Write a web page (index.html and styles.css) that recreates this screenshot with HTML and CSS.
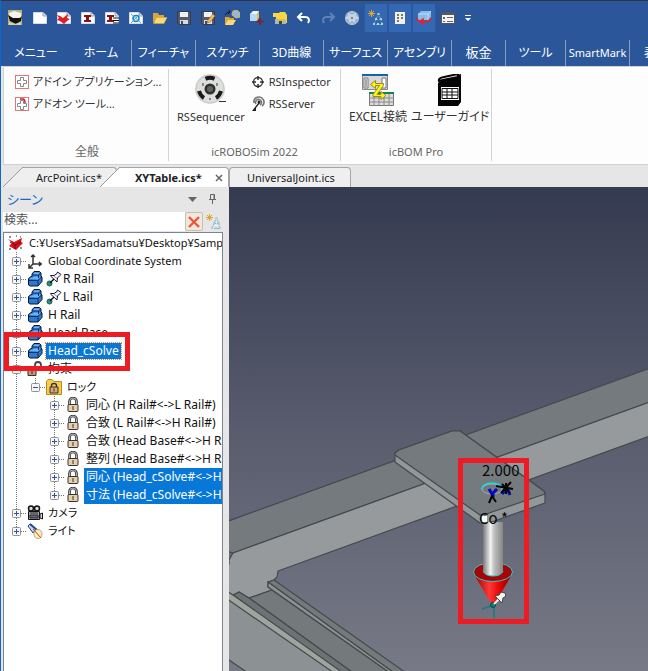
FILE: index.html
```html
<!DOCTYPE html>
<html lang="ja">
<head>
<meta charset="utf-8">
<title>XYTable.ics</title>
<link rel="stylesheet" href="styles.css">
</head>
<body>
<svg class="sprite" aria-hidden="true">
  <symbol id="plus" viewBox="0 0 9 9"><rect x=".5" y=".5" width="8" height="8" rx="1" fill="#f6f6f6" stroke="#919191"/><path d="M2 4.500h5M4.500 2v5" stroke="#3451a0"/></symbol>
  <symbol id="minus" viewBox="0 0 9 9"><rect x=".5" y=".5" width="8" height="8" rx="1" fill="#f6f6f6" stroke="#919191"/><path d="M2 4.500h5" stroke="#3451a0"/></symbol>
  <symbol id="part" viewBox="0 0 16 16"><path d="M1.500 7.500 4 5.500h1V3l2-2.500h5.500L14 2v3l1 1v4.500L11 15H3l-1.500-1z" fill="#2c7ad0" stroke="#07162c"/><path d="M2.500 8 4.500 6.500H6l1-1h5L14 6l-3 2.500zM6 3.500 7.500 1.500H12l1 1-1.500 1.500z" fill="#6fb2f3"/><path d="M2 9.500h9v5M11 9.500 14.500 6M5.500 4h6v3M11.500 4l2-2" fill="none" stroke="#0c2f63"/></symbol>
  <symbol id="pin3d" viewBox="0 0 16 16"><circle cx="3.500" cy="12.500" r="2.500" fill="#2a9380" stroke="#155c55"/><path d="m4 12 4-4" stroke="#111" stroke-width="1.500"/><path d="M4.500 4.500 8 4.500l3-2 .5-1.500L15 3.500l-1 1L11.500 7 11 11 4.500 5z" fill="#f4f4f8" stroke="#15183a"/><path d="m8 5 3 2.500" stroke="#8e90a6"/></symbol>
  <symbol id="lock" viewBox="0 0 16 16"><path d="M4.500 8V4.500a3.500 3.500 0 0 1 7 0V8" fill="none" stroke="#333" stroke-width="2.600"/><path d="M4.500 8V4.500a3.500 3.500 0 0 1 7 0V8" fill="none" stroke="#ddd" stroke-width=".8"/><rect x="3" y="7.500" width="10" height="7" rx="1" fill="#e9cfa9" stroke="#333"/><path d="M8 9v4" stroke="#333"/></symbol>
  <symbol id="filter" viewBox="0 0 16 16"><path d="M3.500 0v7M0 3.500h7M1 1l5 5M6 1 1 6" stroke="#d9a632"/><path d="M10.500 3.500 6 14.500M10.500 3.500l4 11M8 9.500h5M5 14.500h10" stroke="#75a9bd" stroke-dasharray="2 1"/><path d="M9.500 3h2v2h-2zM7 8h2v2H7zM12 8h2v2h-2zM5 13h2v2H5zM9 13h2v2H9zM13 13h2v2h-2z" fill="#a9d2d8"/></symbol>
  <symbol id="sheet" viewBox="0 0 16 16"><path d="M1.500 2.500H11L14.500 6v7.500h-13z" fill="#fff" stroke="#d7dbe2"/><path d="M11 2.500V6h3.500" fill="#dde1e6" stroke="#9aa0ab"/></symbol>
  <symbol id="folder" viewBox="0 0 16 16"><path d="M1 3h5l1 2h5v3H5l-4 5z" fill="#d6a737"/><path d="M4.500 7.500H15L12 13.500H1.500z" fill="#fbd978" stroke="#d7a838" stroke-width=".6"/></symbol>
  <symbol id="disk" viewBox="0 0 16 16"><path d="M1.500 1.500h13v13H3L1.500 13z" fill="#555c68" stroke="#343a46"/><path d="M4 2h8v5H4z" fill="#eef1f5"/><path d="M4 10h8v4H4z" fill="#d6dae1"/><path d="M5 11h2v3H5z" fill="#454c58"/></symbol>
</svg>

<div class="window">
  <header class="titlebar">
    <div class="quick">
      <button class="app" aria-label="アプリケーション"><svg viewBox="0 0 16 16"><path fill="#b9b17f" d="M1 0h14v15H1z"/><path d="m2 3 5-2 7 2v4l-4 2-7-1z" fill="#f4f4ee"/><path d="m1 5 5 3h7l2-2-1 5-5 3-6-3z" fill="#111"/><path d="m2 12 6 2 6-2v3H2z" fill="#d8d29e"/></svg></button>
      <button aria-label="新規"><svg><use href="#sheet"/></svg></button>
      <button aria-label="新規シーン"><svg viewBox="0 0 16 16"><use href="#sheet"/><path d="m1 5 3 1 3 2 5-4-1 4 3 1-3 2-3 3-4-3-3-1 2-2z" fill="#df1e26"/></svg></button>
      <button aria-label="新規図面"><svg viewBox="0 0 16 16"><use href="#sheet"/><path d="M4 5h7v2H9v3h2v2H4v-2h2V7H4z" fill="#8c1018"/></svg></button>
      <button aria-label="図面リスト"><svg viewBox="0 0 16 16"><use href="#sheet"/><path d="M3 5h7v2H8v3h2v2H3v-2h2V7H3z" fill="#8c1018"/><path d="M9 8h6M9 10.500h6M9 13h6" stroke="#111"/></svg></button>
      <button aria-label="CAXA図面"><svg viewBox="0 0 16 16"><use href="#sheet"/><circle cx="8" cy="8.500" r="3" fill="#e8f7ff" stroke="#1684b8" stroke-width="1.500"/><path d="m3 4 10 9M12 4l-9 9" stroke="#48aad2"/></svg></button>
      <button aria-label="開く"><svg><use href="#folder"/></svg></button>
      <button aria-label="保存"><svg><use href="#disk"/></svg></button>
      <button aria-label="名前を付けて保存"><svg viewBox="0 0 16 16"><use href="#disk"/><path d="m7 13 1-3 5-6 2 2-5 6z" fill="#f4bd5d" stroke="#9b6023" stroke-width=".6"/></svg></button>
      <button aria-label="読み込み"><svg viewBox="0 0 16 16"><path d="M1 7h4l1 1h4v2H5l-4 5z" fill="#dba834"/><path d="M4 10h8l-3 5H1z" fill="#fbd978"/><path d="m9 1 4-1 3 3v4l-4 1-4-3z" fill="#8fb8e6" stroke="#e5b33c"/><path d="M1 5q1-3 5-3L5 0M6 2 4 4" fill="none" stroke="#101827"/></svg></button>
      <button aria-label="ブロック追加"><svg viewBox="0 0 16 16"><path d="m2 4 3-3h6L9 4z" fill="#edf7ff"/><path d="M2 4h7v7H2z" fill="#b9daf6"/><path d="m9 4 2-3v7l-2 3z" fill="#e7bf4d"/><path d="M12 8v7M8.500 11.500h7" stroke="#8f1722" stroke-width="1.500"/></svg></button>
      <button aria-label="カタログ"><svg viewBox="0 0 16 16"><path d="M1 3h6l1-1h5l2 3v8H4V7H1z" fill="#f8d746"/><path d="M3 9h10v5H3z" fill="#e6bd28"/><path d="M3 14v-4l2-1 2 2v3zm8 0v-4h3v4z" fill="#a6b8c7"/><path d="M7 14v-3h3v3z" fill="#38464e"/></svg></button>
      <button aria-label="元に戻す"><svg viewBox="0 0 16 16"><path d="m6 3-4 4 4 4M3 7h6c4 0 5 3 3 6" fill="none" stroke="#fff" stroke-width="2"/></svg></button>
      <button aria-label="やり直す"><svg viewBox="0 0 16 16"><path d="m10 3 4 4-4 4M13 7H7c-4 0-5 3-3 6" fill="none" stroke="#6283b2" stroke-width="2"/></svg></button>
      <button aria-label="回転"><svg viewBox="0 0 16 16"><circle cx="8" cy="8" r="7" fill="#bed3e5"/><path d="M3 3v3H1M13 3v3h2M4 13v-3H2M12 13v-3h2M5 2l3 2 3-2M5 14l3-2 3 2" fill="none" stroke="#7f9cb9"/><circle cx="8" cy="8" r="1" fill="#b34b55"/></svg></button>
      <button class="on" aria-label="フィルタ"><svg><use href="#filter"/></svg></button>
      <button class="on" aria-label="パネル"><svg viewBox="0 0 16 16"><path d="M3 2h10v12H3z" fill="#f1f1f1"/><path d="M5 4h2v2H5zm4 0h2v2H9zM5 7h2v2H5zm4 0h2v2H9zm-4 3h2v2H5z" fill="#77736f"/></svg></button>
      <button class="on" aria-label="ビュー回転"><svg viewBox="0 0 16 16"><path d="m2 4 3-3h10v6l-3 3H2z" fill="#8bbce8"/><path d="M2 4h10v6M12 4l3-3" fill="none" stroke="#c0dcf3"/><path d="M1 8c0 5 13 5 14 0M7 9v5l-3-2.500z" fill="none" stroke="#e62128" stroke-width="1.500"/></svg></button>
      <button aria-label="プロパティ"><svg viewBox="0 0 16 16"><path d="M1.500 2.500h13v11h-13z" fill="#f5f5f5" stroke="#51555d"/><path d="M2 3h12v2H2z" fill="#555b66"/><path d="M3 7h2v2H3zm0 4h2v1H3zm4-4h6v1H7zm0 4h6v1H7z" fill="#666"/></svg></button>
      <button class="more" aria-label="カスタマイズ"><svg viewBox="0 0 8 8"><path d="M1 1h6v1H1zM1 4h6L4 7z" fill="#fff"/></svg></button>
    </div>
    <nav class="tabs">
      <a class="plain menu" href="#">メニュー</a><a class="home" href="#">ホーム</a><a href="#">フィーチャ</a><a href="#">スケッチ</a><a href="#">3D曲線</a><a href="#">サーフェス</a><a href="#">アセンブリ</a><a class="w54" href="#">板金</a><a class="w60" href="#">ツール</a><a class="smart" href="#">SmartMark</a><a class="plain last" href="#">表</a>
    </nav>
  </header>

  <section class="ribbon">
    <div class="group general">
      <div class="stack">
        <button><svg viewBox="0 0 16 16"><rect x="1.500" y="1.500" width="13" height="13" fill="#fff" stroke="#df7777"/><path d="M6.500 3.500h3v3h3v3h-3v3h-3v-3h-3v-3h3z" fill="#fff" stroke="#888"/></svg>アドイン アプリケーション...</button>
        <button><svg viewBox="0 0 16 16"><rect x="1.500" y="1.500" width="13" height="13" fill="#fff" stroke="#df7777"/><path d="M6.500 4.500h3v3h3v3h-3v3h-3v-3h-3v-3h3z" fill="#fff" stroke="#888"/><path d="M6 3h3q2 0 2 4" fill="none" stroke="#c7222b" stroke-width="1.500"/></svg>アドオン ツール...</button>
      </div>
      <h2>全般</h2>
    </div>
    <div class="group robo">
      <div class="tools">
        <button class="big"><svg viewBox="0 0 32 32"><circle cx="15" cy="15" r="15" fill="#dedfdc"/><circle cx="15" cy="15" r="14" fill="none" stroke="#c5c6c4"/><circle cx="15" cy="15" r="5.500" fill="#2c302e"/><circle cx="15" cy="15" r="3" fill="#606562"/><g fill="none" stroke="#171a19" stroke-width="4"><path d="M10.500 4.800q4.500-2 9 0"/><path d="M4 17q1.500 5 5 7"/><path d="M26 17q-1.500 5-5 7"/></g><path d="M8 9v3M22 9v3M15 24v2M24 27.500h7" stroke="#333"/></svg>RSSequencer</button>
        <div class="stack">
          <button><svg viewBox="0 0 16 16"><circle cx="8" cy="8" r="4.500" fill="none" stroke="#333" stroke-width="1.300"/><path d="M8 2v4M8 10v4M2 8h4M10 8h4" stroke="#333" stroke-width="1.500"/></svg>RSInspector</button>
          <button><svg viewBox="0 0 16 16"><path d="M4 7a5 5 0 1 1 8 3M6 8a3 3 0 1 1 4 1" fill="none" stroke="#777" stroke-width="1.600"/><path d="m2 15 3-4 4-5 1 1-4 5v3z" fill="#222"/><circle cx="9" cy="6" r="1.500" fill="#222"/></svg>RSServer</button>
        </div>
      </div>
      <h2>icROBOSim 2022</h2>
    </div>
    <div class="group bom">
      <div class="tools">
        <button class="big"><svg viewBox="0 0 32 32"><path d="M.5.500h25v15H.5z" fill="#d8d8d8" stroke="#888"/><path d="M0 0h26v2H0z" fill="#1464aa"/><path d="M2 4h4v10H2zm18 0h4v10h-4z" fill="#fff" stroke="#777"/><path d="M3 6h2M3 8h2M3 10h2M3 12h2" stroke="#555"/><path d="M7.500 18.500h24v13h-24z" fill="#ddd" stroke="#777"/><path d="M7 18h25v2H7z" fill="#15864a"/><path d="M7 24h25M7 28h25M12 20v12M17 20v12M22 20v12M27 20v12" stroke="#888"/><path d="m13.500 6.500-5 4 5 4v-3h4l-6.500 9v2h8v3l5-4-5-4v3h-4l6.500-9v-2h-8z" fill="#fff21a" stroke="#9c8d14"/></svg>EXCEL接続</button>
        <button class="big"><svg viewBox="0 0 32 32"><path d="M4 9 9 5l18-5v28l-3 4H4z" fill="#050505"/><path d="M5 7q-1-3 5-4l14-3v3L9 6z" fill="#fff" stroke="#050505" stroke-width="2"/><path d="M7 13h18v13H7z" fill="#fff"/><path d="M8 14.500h16v10H8zM8 18h16M8 21h16M13 14v11M18 14v11" fill="none" stroke="#111"/></svg>ユーザーガイド</button>
      </div>
      <h2>icBOM Pro</h2>
    </div>
  </section>

  <nav class="docs">
    <button class="doc first"><svg class="edge" viewBox="0 0 20 20"><path d="M0 20 20 0v20z" fill="#efefef"/><path d="M0 20 20 0" stroke="#999"/></svg><span>ArcPoint.ics*</span></button><button class="doc active"><svg class="edge" viewBox="0 0 20 20"><path d="M0 20 20 0v20z" fill="#fff"/><path d="M0 20 20 0" stroke="#999"/></svg><span>XYTable.ics*<svg class="close" viewBox="0 0 8 8"><path d="m1 1 6 6M7 1 1 7" stroke="#666" stroke-width="1.500"/></svg></span></button><button class="doc third"><span>UniversalJoint.ics</span></button>
  </nav>

  <main class="work">
    <aside class="panel">
      <div class="head"><h1>シーン</h1><svg viewBox="0 0 10 10"><path d="M0 3h9L4.500 8z" fill="#666"/></svg><svg class="pin" viewBox="0 0 10 10"><path d="M2.500 5.500v-5h4v5M6 1v5M1 5.500h7M4.500 6v4" fill="none" stroke="#666"/></svg></div>
      <div class="search"><input type="text" aria-label="検索" placeholder="検索..."><button class="clear" aria-label="クリア"><svg viewBox="0 0 12 12"><path d="m1 1 10 10M11 1 1 11" stroke="#f0553b" stroke-width="2.400"/></svg></button><button class="find" aria-label="フィルタ"><svg><use href="#filter"/></svg></button></div>
      <div class="tree">
        <div class="row root"><svg viewBox="0 0 16 16"><path d="m0 4 6 3 8-4-1 4 2 1-3 3-4 4-7-4 3-3z" fill="#d9101c"/><path d="m2 7 5 3 6-3M7 10v4" fill="none" stroke="#740911"/><path d="M1 2h2M8 1h1M12 2h1M1 14h2M12 13h2" stroke="#222"/></svg><span class="small">C:¥Users¥Sadamatsu¥Desktop¥Samp</span></div>
        <ul>
          <li><div class="row"><svg class="x"><use href="#plus"/></svg><i></i><svg viewBox="0 0 16 16"><path d="M6 11V2M6 11h9M6 11l-4 4M4 4l2-2 2 2M12 9l2 2-2 2M2 11v4h4" fill="none" stroke="#333" stroke-width="1.500"/></svg><span class="small">Global Coordinate System</span></div></li>
          <li><div class="row"><svg class="x"><use href="#plus"/></svg><i></i><svg><use href="#part"/></svg><svg class="fixed"><use href="#pin3d"/></svg><span class="near">R Rail</span></div></li>
          <li><div class="row"><svg class="x"><use href="#plus"/></svg><i></i><svg><use href="#part"/></svg><svg class="fixed"><use href="#pin3d"/></svg><span class="near">L Rail</span></div></li>
          <li><div class="row"><svg class="x"><use href="#plus"/></svg><i></i><svg><use href="#part"/></svg><span>H Rail</span></div></li>
          <li><div class="row"><svg class="x"><use href="#plus"/></svg><i></i><svg><use href="#part"/></svg><span>Head Base</span></div></li>
          <li class="marked"><div class="row"><svg class="x"><use href="#plus"/></svg><i></i><svg><use href="#part"/></svg><span class="focus">Head_cSolve</span></div></li>
          <li><div class="row"><svg class="x"><use href="#minus"/></svg><i></i><svg viewBox="0 0 16 16"><path d="M8 8V4q0-3 3-3t3 3v2" fill="none" stroke="#444" stroke-width="1.800"/><path d="M1 7.500h8v7H1z" fill="#cc9170" stroke="#3c302a"/><path d="M5 9v4" stroke="#333"/></svg><span>拘束</span></div>
            <ul class="single">
              <li><div class="row"><svg class="x"><use href="#minus"/></svg><i></i><svg viewBox="0 0 16 16"><path d="M.5 2.500 2 .500h4l2 2h7.500v13H.5z" fill="#f8cc4b" stroke="#b98c18"/><path d="M5.500 8V6.500q0-2 2.500-2t2.500 2V8" fill="none" stroke="#333" stroke-width="1.400"/><path d="M4 8h8v6H4z" fill="#d9a67e" stroke="#333"/><path d="M8 9.500v3" stroke="#333"/></svg><span class="small">ロック</span></div>
                <ul>
                  <li><div class="row"><svg class="x"><use href="#plus"/></svg><i></i><svg><use href="#lock"/></svg><span>同心 (H Rail#&lt;-&gt;L Rail#)</span></div></li>
                  <li><div class="row"><svg class="x"><use href="#plus"/></svg><i></i><svg><use href="#lock"/></svg><span>合致 (L Rail#&lt;-&gt;H Rail#)</span></div></li>
                  <li><div class="row"><svg class="x"><use href="#plus"/></svg><i></i><svg><use href="#lock"/></svg><span>合致 (Head Base#&lt;-&gt;H Ra</span></div></li>
                  <li><div class="row"><svg class="x"><use href="#plus"/></svg><i></i><svg><use href="#lock"/></svg><span>整列 (Head Base#&lt;-&gt;H Ra</span></div></li>
                  <li><div class="row"><svg class="x"><use href="#plus"/></svg><i></i><svg><use href="#lock"/></svg><span class="sel">同心 (Head_cSolve#&lt;-&gt;H</span></div></li>
                  <li><div class="row"><svg class="x"><use href="#plus"/></svg><i></i><svg><use href="#lock"/></svg><span class="sel">寸法 (Head_cSolve#&lt;-&gt;H</span></div></li>
                </ul>
              </li>
            </ul>
          </li>
          <li><div class="row"><svg class="x"><use href="#plus"/></svg><i></i><svg viewBox="0 0 16 16"><circle cx="4" cy="3.500" r="2.500" fill="#ddd" stroke="#111" stroke-width="1.500"/><circle cx="10" cy="3.500" r="2.500" fill="#ddd" stroke="#111" stroke-width="1.500"/><path d="M1.500 6.500h11v8h-11z" fill="#aaa" stroke="#111"/><path d="M3 8h8M3 10h8v3H3z" fill="#666b85" stroke="#222"/><path d="m13 9 2.500-1v6L13 13z" fill="#ddd" stroke="#111"/></svg><span class="small">カメラ</span></div></li>
          <li><div class="row"><svg class="x"><use href="#plus"/></svg><i></i><svg viewBox="0 0 16 16"><path d="m1 3 2-2 6 5-3 4z" fill="#c3d8ef" stroke="#26456d"/><path d="m3 1 7 6" stroke="#244883" stroke-width="2"/><ellipse cx="11" cy="11" rx="4" ry="4.500" fill="#fff0b5" stroke="#b7a980"/><path d="m6 6 8 9" stroke="#d33"/></svg><span class="small">ライト</span></div></li>
        </ul>
      </div>
    </aside>
    <section class="view">
      <svg viewBox="229 187 419 484" preserveAspectRatio="xMinYMin slice" role="img" aria-label="3Dビュー">
        <defs>
          <linearGradient id="rod"><stop offset="0" stop-color="#777"/><stop offset=".15" stop-color="#aaa"/><stop offset=".38" stop-color="#f4f4f4"/><stop offset=".55" stop-color="#c0c0c0"/><stop offset="1" stop-color="#858585"/></linearGradient>
          <linearGradient id="cone"><stop offset="0" stop-color="#a20000"/><stop offset=".4" stop-color="#ff3838"/><stop offset=".7" stop-color="#e40000"/><stop offset="1" stop-color="#870000"/></linearGradient>
        </defs>
        <g stroke="#46494b" stroke-width="1.200" stroke-linejoin="round">
          <path d="M220 524 660 364.600v33.600L233 553l-13-4z" fill="#747a7d"/>
          <path d="M233 553 660 398.200v34L278 571l-1 6-3 3-6 2v5l4 3-23 8-10-6-6 3-13-3v-20l9-8v-4z" fill="#969a9c"/>
          <path d="M220 587 345 675H251L220 653z" fill="#8c9294" stroke="none"/>
          <path d="m249 598 23-8 121 85H356z" fill="#747a7c"/>
          <path d="m233 595 6-3 10 6 107 77h-11z" fill="#6d7375"/>
          <path d="m220 587 13 8 113 80h-9L220 594z" fill="#a0a49f"/>
          <path d="m268 582 6-2 135 95h-12z" fill="#747a7c"/>
          <path d="M268 582v5l125 88h4z" fill="#8d9394"/>
          <path d="m229 660 22 15" fill="none"/>
          <path d="m395 453 4-3 53-19h8l84 60 1 3v9l-59 21-6-1-85-61z" fill="#92979a"/>
          <path d="m395 453 4-3 53-19h8l84 60 1 3-59 20-6 1-85-60z" fill="#747a7d"/>
          <path d="M485 515v9" fill="none"/>
        </g>
        <ellipse cx="492" cy="489" rx="10" ry="5" fill="#74797c" stroke="#aaa"/><path d="M482 489a10 6 0 1 1 20 0" fill="none" stroke="#19dce0" stroke-width="1.500"/>
        <g fill="none" stroke-width="2"><path d="m489 489 3 5 5-5m-4 3v5m9-3 5-6 3 7" stroke="#0508c9" stroke-width="3"/><path d="m489 503 3-7 4 6M496 486l17 3M502 484l8 9m-9 0 10-11m-5 1v11" stroke="#050505" stroke-width="2"/></g>
        <path d="M475 576 493 607 511 576z" fill="url(#cone)"/>
        <ellipse cx="493" cy="572" rx="19.500" ry="9.500" fill="#a50409" stroke="#24d2cc"/>
        <path d="M483 522h20v49q-2 5-10 5t-10-5z" fill="url(#rod)"/><path d="M483 571q2 5 10 5t10-5" fill="none" stroke="#24d2cc"/>
        <path d="M494 608v16M491 606l-9 3" stroke="#12817e" stroke-width="1.500"/><circle cx="493" cy="605" r="2.500" fill="#157b78" stroke="#064a49"/>
        <path d="m494 604 5-5" stroke="#eee" stroke-width="2"/><path d="m495 596 4-1 2-3 4 1 1 3-3 2-1 5z" fill="#f4f4ee" stroke="#444"/>
        <path d="M482 516h5v6h-5z" fill="#f5fff8"/>
        <text x="482" y="476">2.000</text><text x="479" y="524">Co *</text>
        <rect x="460.500" y="460.500" width="66" height="161" fill="none" stroke="#ed1c24" stroke-width="5"/>
      </svg>
    </section>
  </main>
</div>
</body>
</html>
```
FILE: styles.css
```css
*, *::after { box-sizing: border-box; }
body { margin: 0; font: 12px/18px "Noto Sans", "Noto Sans CJK JP", sans-serif; font-feature-settings: "palt"; color: #222; }
button { font: inherit; font-feature-settings: inherit; color: inherit; padding: 0; border: 0; background: none; }
h1, h2, ul { margin: 0; padding: 0; font-size: inherit; font-weight: normal; }
a { color: inherit; text-decoration: none; }
svg { display: block; width: 16px; height: 16px; flex: none; }
.sprite { position: absolute; width: 0; height: 0; }

.window { display: flex; flex-direction: column; height: 100vh; overflow: hidden; background: #e6e6e6; border-left: 1px solid #0b66d0; }
.titlebar { background: #2b579a; border-top: 1px solid #2f3546; }
.quick { display: flex; align-items: center; height: 39px; padding-bottom: 5px; }
.quick button { display: grid; place-items: center; width: 24px; height: 28px; }
.quick .app { width: 27px; }
.quick .on { width: 22px; margin: 0 1px; background: #3568b2; }
.quick .more { width: 15px; }
.quick .more svg { width: 8px; height: 8px; }
.tabs { display: flex; height: 26px; overflow: hidden; color: #fff; line-height: 25px; white-space: nowrap; }
.tabs a { flex: none; width: 64px; text-align: center; border-right: 1px solid #8c9db8; }
.tabs .menu { width: 70px; }
.tabs .home { width: 61px; }
.tabs .w54 { width: 54px; font-size: 13px; }
.tabs .w60 { width: 60px; }
.tabs .smart { font-size: 11px; }
.tabs .plain { border-right: 0; }
.tabs .last { padding-left: 14px; text-align: left; }

.ribbon { display: flex; height: 99px; margin-left: 2px; padding: 2px 0 3px; background: #fdfdfd; border: 1px solid #d2d2d2; border-right: 0; color: #333; font-size: 11px; }
.group { display: flex; flex-direction: column; justify-content: space-between; border-right: 1px solid #d4d4d4; }
.group h2 { text-align: center; color: #666; line-height: 19px; }
.general { width: 165px; padding-left: 10px; }
.general h2 { font-size: 12px; padding-right: 8px; }
.robo { width: 172px; padding-left: 8px; }
.robo h2, .bom h2 { padding-right: 8px; }
.bom { width: 151px; padding-left: 8px; }
.stack { display: flex; flex-direction: column; gap: 4px; padding-top: 4px; }
.stack button { display: flex; align-items: center; gap: 3px; white-space: nowrap; }
.tools { display: flex; }
.robo .stack { margin-left: 5px; }
.big { display: flex; flex-direction: column; align-items: center; gap: 2px; padding-top: 5px; white-space: nowrap; }
.big svg { width: 32px; height: 32px; }
.bom .tools { gap: 4px; font-size: 12px; }

.docs { display: flex; height: 22px; padding: 2px 0 0 2px; font-size: 11px; }
.doc { display: flex; height: 20px; }
.doc .edge { width: 20px; height: 20px; }
.doc > span { display: flex; align-items: center; height: 20px; border-top: 1px solid #a5a5a5; border-right: 1px solid #a5a5a5; background: #efefef; border-radius: 0 4px 0 0; }
.first > span { width: 94px; padding-left: 13px; }
.active { margin-left: -17px; position: relative; font-weight: bold; }
.active > span { width: 109px; padding: 0 5px 0 15px; background: #fff; justify-content: space-between; }
.doc .close { width: 8px; height: 8px; }
.third > span { width: 122px; padding-left: 17px; border-left: 1px solid #a5a5a5; border-radius: 4px 4px 0 0; }

.work { display: grid; grid-template-columns: 228px 1fr; flex: 1; min-height: 0; }
.panel { display: flex; flex-direction: column; min-width: 0; min-height: 0; padding: 0 6px 0 2px; }
.head { display: flex; align-items: center; height: 24px; padding: 0 5px 0 4px; gap: 10px; }
.head h1 { flex: 1; color: #1e66c8; font-size: 13px; }
.head svg { width: 10px; height: 10px; }
.search { display: flex; height: 21px; gap: 3px; align-items: center; padding-right: 1px; }
.search input { flex: 1; min-width: 0; height: 19px; border: 0; padding: 0 1px 4px; background: #fff; font: inherit; font-feature-settings: inherit; }
.search input::placeholder { color: #555; opacity: 1; }
.search .clear { display: grid; place-items: center; width: 18px; height: 19px; border: 1px solid #c8c0ae; border-radius: 2px; background: #eee9dc; margin-left: -3px; }
.clear svg { width: 12px; height: 12px; }
.tree { flex: 1; min-height: 0; overflow: hidden; padding-top: 1px; background: #fff; border: 1px solid #7d8491; border-bottom: 0; color: #111; }
.tree ul { list-style: none; padding-left: 19px; background: repeating-linear-gradient(#777 0 1px, transparent 1px 2px) 23px 0 / 1px calc(100% - 9px) no-repeat; }
.tree > ul { padding-left: 8px; background-position: 12px 0; }
.tree .single { background-size: 1px 9px; }
.row { display: flex; align-items: center; height: 18px; white-space: nowrap; }
.row .x { width: 9px; height: 9px; }
.row i { flex: none; width: 6px; height: 1px; background: repeating-linear-gradient(90deg, #777 0 1px, transparent 1px 2px); }
.row span { margin-left: 3px; padding: 0 2px; line-height: 18px; }
.row .small { font-size: 11px; }
.root { padding-left: 4px; }
.row .fixed { margin-left: 3px; }
.row .near { margin-left: 0; padding-left: 1px; }
.row .focus { line-height: 16px; background: #0878d8; color: #fff; outline: 1px dotted #d98b39; }
.row .sel { flex: 1; background: #0878d8; color: #fff; }
.marked { position: relative; }
.marked::after { content: ""; position: absolute; left: -8px; top: -10px; width: 126px; height: 39px; border: 5px solid #ed1c24; }
.view { min-width: 0; min-height: 0; background: linear-gradient(#343a50, #5c5f70 55%, #777986); }
.view svg { width: 100%; height: 100%; }
.view text { font: 15px "Noto Sans CJK JP", sans-serif; fill: #080808; }
```
